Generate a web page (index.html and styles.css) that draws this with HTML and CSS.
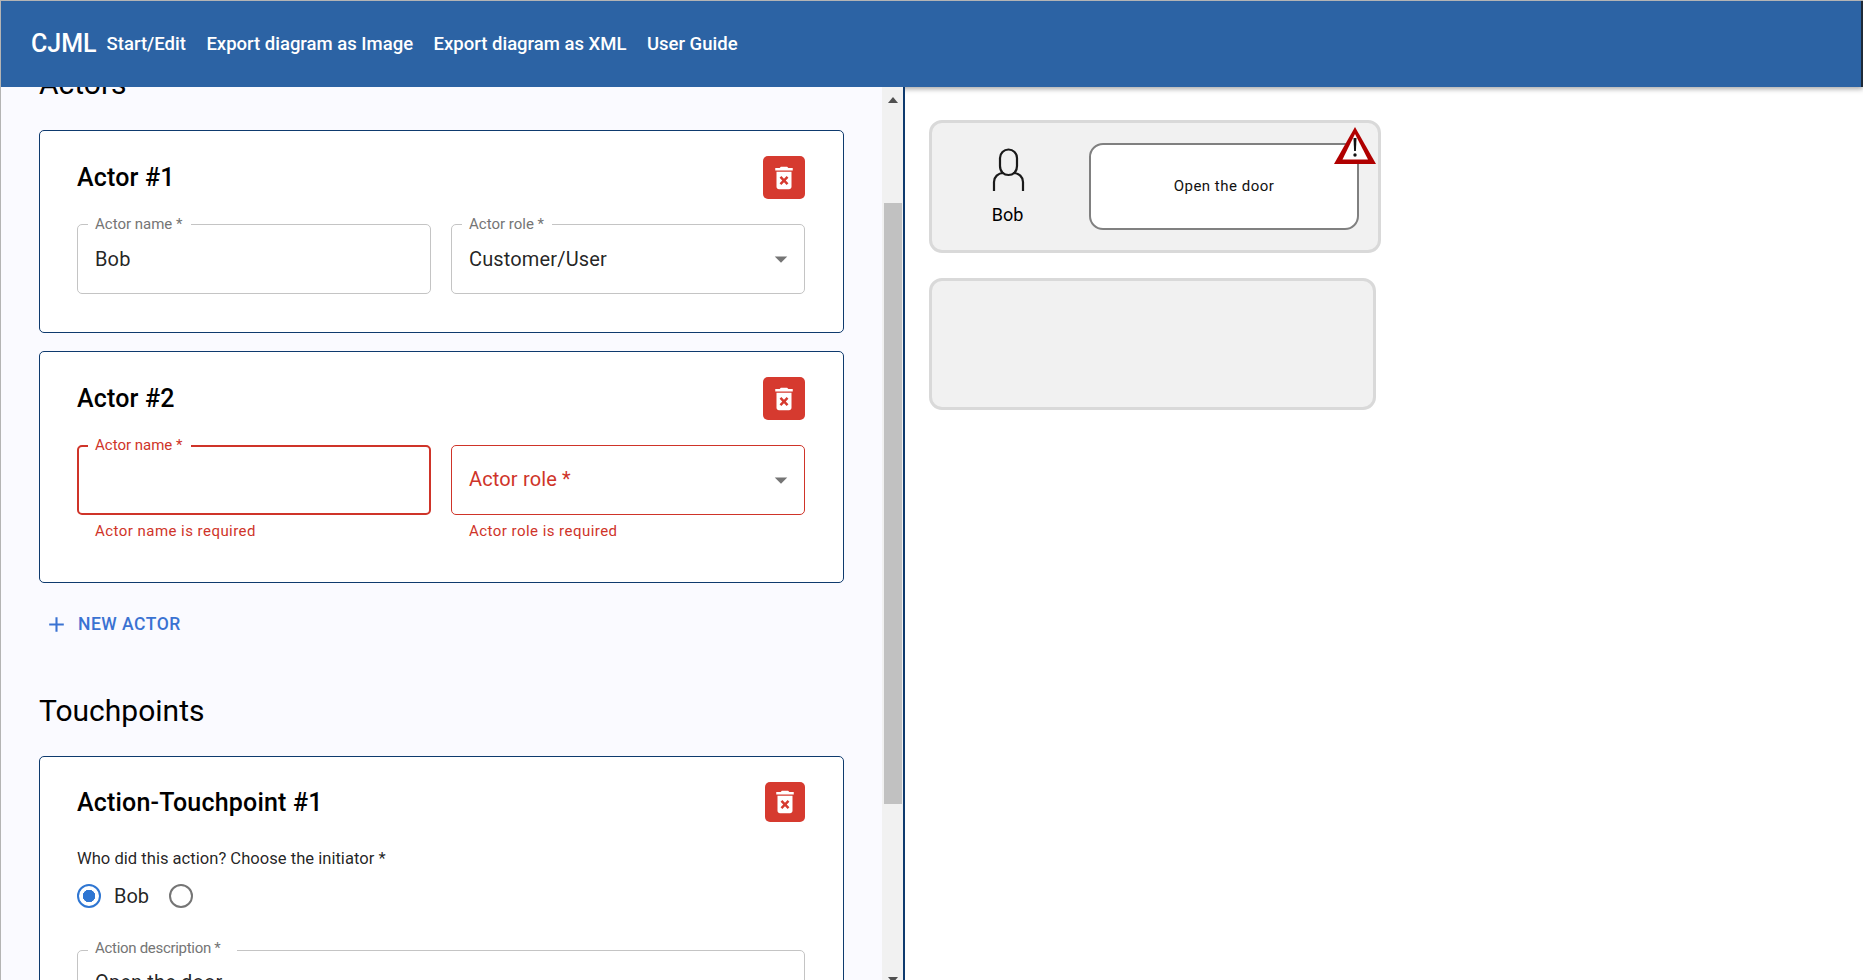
FILE: index.html
```html
<!DOCTYPE html>
<html lang="en">
<head>
<meta charset="utf-8">
<title>CJML</title>
<link rel="stylesheet" href="styles.css">
</head>
<body>
<div class="app">
  <header class="appbar">
    <span class="brand">CJML</span>
    <nav class="nav">
      <a class="nav-link">Start/Edit</a>
      <a class="nav-link">Export diagram as Image</a>
      <a class="nav-link">Export diagram as XML</a>
      <a class="nav-link">User Guide</a>
    </nav>
  </header>
  <main class="workspace">
    <section class="editor">
      <div class="form">
        <h2 class="section-title">Actors</h2>

        <article class="card">
          <div class="card-head">
            <h3 class="card-title">Actor #1</h3>
            <button class="delete-btn" type="button" aria-label="Delete actor 1">
              <svg class="delete-icon" viewBox="0 0 24 24"><path d="M6 19c0 1.1.9 2 2 2h8c1.1 0 2-.9 2-2V7H6v12zm2.46-7.12 1.41-1.41L12 12.59l2.12-2.12 1.41 1.41L13.41 14l2.12 2.12-1.41 1.41L12 15.41l-2.12 2.12-1.41-1.41L10.59 14l-2.13-2.12zM15.5 4l-1-1h-5l-1 1H5v2h14V4z"/></svg>
            </button>
          </div>
          <div class="field-row">
            <div class="field">
              <div class="box"><span class="float-label">Actor name *</span><span class="value">Bob</span></div>
            </div>
            <div class="field">
              <div class="box"><span class="float-label">Actor role *</span><span class="value">Customer/User</span>
                <svg class="caret" viewBox="0 0 24 24"><path d="M7 10l5 5 5-5z"/></svg>
              </div>
            </div>
          </div>
        </article>

        <article class="card">
          <div class="card-head">
            <h3 class="card-title">Actor #2</h3>
            <button class="delete-btn" type="button" aria-label="Delete actor 2">
              <svg class="delete-icon" viewBox="0 0 24 24"><path d="M6 19c0 1.1.9 2 2 2h8c1.1 0 2-.9 2-2V7H6v12zm2.46-7.12 1.41-1.41L12 12.59l2.12-2.12 1.41 1.41L13.41 14l2.12 2.12-1.41 1.41L12 15.41l-2.12 2.12-1.41-1.41L10.59 14l-2.13-2.12zM15.5 4l-1-1h-5l-1 1H5v2h14V4z"/></svg>
            </button>
          </div>
          <div class="field-row">
            <div class="field">
              <div class="box box-error box-focus"><span class="float-label label-error">Actor name *</span></div>
              <p class="helper">Actor name is required</p>
            </div>
            <div class="field">
              <div class="box box-error"><span class="value value-error">Actor role *</span>
                <svg class="caret" viewBox="0 0 24 24"><path d="M7 10l5 5 5-5z"/></svg>
              </div>
              <p class="helper">Actor role is required</p>
            </div>
          </div>
        </article>

        <button class="add-btn" type="button">
          <svg class="add-icon" viewBox="0 0 24 24"><path d="M19 13h-6v6h-2v-6H5v-2h6V5h2v6h6v2z"/></svg>
          NEW ACTOR
        </button>

        <h2 class="section-title section-title-touch">Touchpoints</h2>

        <article class="card">
          <div class="card-head card-head-touch">
            <h3 class="card-title card-title-touch">Action-Touchpoint #1</h3>
            <button class="delete-btn delete-btn-touch" type="button" aria-label="Delete touchpoint 1">
              <svg class="delete-icon" viewBox="0 0 24 24"><path d="M6 19c0 1.1.9 2 2 2h8c1.1 0 2-.9 2-2V7H6v12zm2.46-7.12 1.41-1.41L12 12.59l2.12-2.12 1.41 1.41L13.41 14l2.12 2.12-1.41 1.41L12 15.41l-2.12 2.12-1.41-1.41L10.59 14l-2.13-2.12zM15.5 4l-1-1h-5l-1 1H5v2h14V4z"/></svg>
            </button>
          </div>
          <p class="question">Who did this action? Choose the initiator *</p>
          <div class="radio-row">
            <span class="radio radio-on"></span>
            <span class="radio-label">Bob</span>
            <span class="radio"></span>
          </div>
          <div class="box box-wide"><span class="float-label label-wide">Action description *</span><span class="value">Open the door</span></div>
        </article>
      </div>

      <div class="scrollbar">
        <span class="arrow-up"></span>
        <span class="thumb"></span>
        <span class="arrow-down"></span>
      </div>
    </section>

    <section class="diagram">
      <div class="lane lane-first">
        <div class="actor">
          <svg class="actor-icon" viewBox="0 0 34 44"><path d="M9 10a8.500 8.500 0 0 1 17 0v8c0 6-4 9-8.500 9S9 24 9 18zM3 43V34c0-5 4-9 9.500-9M32 43V34c0-5-4-9-9.500-9"/></svg>
          <span class="actor-name">Bob</span>
        </div>
        <div class="touchpoint">
          <span class="touchpoint-text">Open the door</span>
          <svg class="warning" viewBox="0 0 42 37"><path class="warning-red" d="M21 0 42 37H0Z"/><path class="warning-inner" d="M21 7 34 32.500H8.500Z"/><path class="warning-mark" d="M19.500 11h3l-.6 13h-1.800z"/><circle class="warning-mark" cx="21" cy="28" r="1.700"/></svg>
        </div>
      </div>
      <div class="lane lane-second"></div>
    </section>
  </main>
</div>
</body>
</html>
```
FILE: styles.css
```css
* { box-sizing: border-box; }
html, body { margin: 0; height: 100%; overflow: hidden; }
body { font-family: Roboto, "Liberation Sans", sans-serif; color: #000; background: #fff; }
h2, h3, p { margin: 0; }
button { font-family: inherit; border: 0; padding: 0; }

.app { height: 980px; display: flex; flex-direction: column; border-top: 1px solid #b4b4b4; border-left: 1px solid #b4b4b4; overflow: hidden; }

.appbar { height: 86px; flex: none; display: flex; align-items: center; padding: 0 0 1px 30px; background: #2c63a4; color: #fff; box-shadow: 0 2px 5px rgba(0,0,0,.35); border-right: 2px solid #1e2a38; position: relative; z-index: 1; }
.brand { font-size: 25px; font-weight: 500; margin-right: 10px; }
.nav { display: flex; gap: 20.500px; }
.nav-link { font-size: 18.500px; font-weight: 500; }

.workspace { flex: 1; min-height: 0; display: flex; }
.editor { width: 904px; flex: none; display: flex; border-right: 2px solid #0e3a6e; background: #fafaff; overflow: hidden; position: relative; z-index: 2; }
.form { width: 881px; flex: none; padding: 0 38px; margin-top: -21px; }

.section-title { font-size: 30px; font-weight: 400; line-height: 36px; margin-bottom: 28px; }
.section-title-touch { margin-top: 47px; margin-bottom: 27px; }

.card { background: #fff; border: 1px solid #0e3a6e; border-radius: 5px; padding: 25px 38px 38px 37px; margin-bottom: 18px; }
.card-head { display: flex; justify-content: space-between; align-items: center; margin-bottom: 25px; }
.card-head-touch { margin-bottom: 26px; }
.card-title { font-size: 25px; font-weight: 500; line-height: 32px; letter-spacing: .19px; }
.card-title-touch { padding-top: 2px; }
.delete-btn { width: 42px; height: 43px; border-radius: 5px; background: #d63a2f; display: flex; align-items: center; justify-content: center; }
.delete-btn-touch { width: 40px; height: 40px; }
.delete-icon { width: 30px; height: 30px; fill: #fff; }

.field-row { display: grid; grid-template-columns: 1fr 1fr; gap: 20px; }
.box { height: 70px; border: 1.25px solid #c4c4c4; border-radius: 5px; position: relative; display: flex; align-items: center; justify-content: space-between; padding: 0 8px 0 17px; }
.box-error { border-color: #cf3429; }
.box-focus { border-width: 2.5px; }
.box-wide { align-items: flex-start; padding-top: 19px; }
.float-label { position: absolute; left: 10px; top: -10px; padding: 0 8px 0 7px; background: #fff; font-size: 15px; line-height: 18px; color: #757575; }
.box-focus .float-label { left: 9px; top: -11px; }
.label-error { color: #cf3429; }
.label-wide { top: -12px; letter-spacing: -.3px; padding-right: 16px; }
.value { font-size: 20px; letter-spacing: .15px; color: rgba(0,0,0,.87); }
.value-error { color: #cf3429; padding-bottom: 2px; }
.caret { width: 30px; height: 30px; fill: #757575; }
.helper { font-size: 15px; line-height: 20px; letter-spacing: .46px; color: #cf3429; margin: 6px 0 3px 18px; }

.add-btn { display: flex; align-items: center; gap: 9px; height: 44px; margin: 19px 0 0 5px; background: none; color: #3a72d2; font-size: 17.500px; font-weight: 500; letter-spacing: .5px; }
.add-icon { width: 25px; height: 25px; fill: #3a72d2; }

.question { font-size: 16.600px; line-height: 22px; color: rgba(0,0,0,.87); margin-bottom: 14px; }
.radio-row { display: flex; align-items: center; height: 24px; margin-bottom: 42px; }
.radio { width: 24px; height: 24px; border: 2.500px solid #757575; border-radius: 50%; flex: none; }
.radio-on { border-color: #2f76d2; background: radial-gradient(circle, #2f76d2 0 6px, #fff 6.500px); }
.radio-label { font-size: 20px; margin: 0 20px 0 13px; color: rgba(0,0,0,.87); }

.scrollbar { width: 21px; flex: none; background: #f1f1f1; display: flex; flex-direction: column; align-items: center; height: 900px; padding: 10px 1px 0 2px; }
.arrow-up { width: 0; height: 0; border: 5px solid transparent; border-top: 0; border-bottom: 6px solid #505050; }
.thumb { width: 100%; height: 601px; background: #c1c1c1; margin-top: 100px; }
.arrow-down { width: 0; height: 0; border: 5px solid transparent; border-bottom: 0; border-top: 6px solid #505050; margin-top: 173px; }

.diagram { flex: 1; min-width: 0; padding: 33px 0 0 24px; display: flex; flex-direction: column; gap: 25px; align-items: flex-start; }
.lane { background: #f1f1f1; border: 3px solid #d9d9d9; border-radius: 13px; }
.lane-first { width: 452px; height: 133px; display: flex; align-items: center; padding: 0 19px 0 0; }
.lane-second { width: 447px; height: 132px; }
.actor { width: 157px; flex: none; display: flex; flex-direction: column; align-items: center; gap: 11px; padding: 3px 6px 0 0; }
.actor-icon { width: 34px; height: 44px; fill: none; stroke: #1a1a1a; stroke-width: 2.200; margin-top: -1px; }
.actor-name { font-size: 18px; line-height: 24px; font-weight: 400; }
.touchpoint { width: 270px; height: 87px; background: #fff; border: 2px solid #808080; border-radius: 14px; position: relative; display: flex; align-items: center; justify-content: center; padding-bottom: 2px; }
.touchpoint-text { font-size: 15px; letter-spacing: .5px; color: #111; }
.warning { position: absolute; right: -19px; top: -18px; width: 42px; height: 37px; }
.warning-red { fill: #b00000; }
.warning-inner { fill: #fff; }
.warning-mark { fill: #111; }
```
